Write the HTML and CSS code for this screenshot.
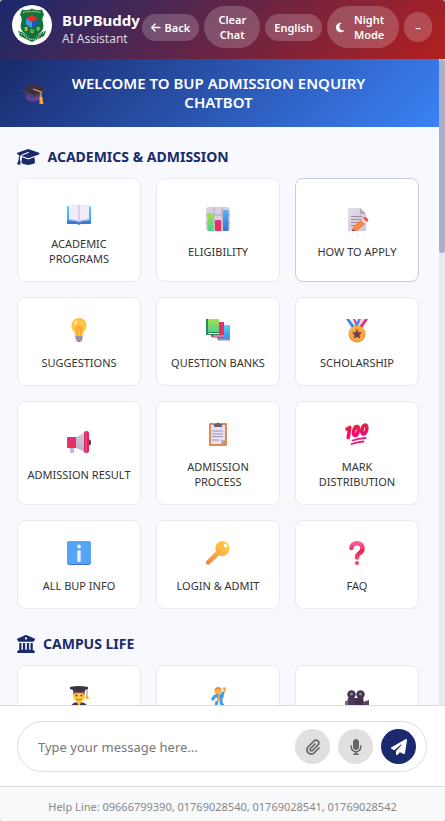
FILE: index.html
```html
<!DOCTYPE html>
<html lang="en">
<head>
<meta charset="utf-8">
<meta name="viewport" content="width=device-width, initial-scale=1">
<title>BUPBuddy</title>
<link rel="stylesheet" href="styles.css">
</head>
<body>
<svg class="defs" width="0" height="0" aria-hidden="true">
  <defs>
    <linearGradient id="blue" x1="0" y1="0" x2="0" y2="1"><stop offset="0" stop-color="#4cb4fa"/><stop offset="1" stop-color="#3a70d4"/></linearGradient>
    <linearGradient id="sky" x1="0" y1="0" x2="0" y2="1"><stop offset="0" stop-color="#56d3f8"/><stop offset="1" stop-color="#3597ec"/></linearGradient>
    <linearGradient id="green" x1="0" y1="0" x2="0" y2="1"><stop offset="0" stop-color="#a6e04a"/><stop offset="1" stop-color="#4bd191"/></linearGradient>
    <linearGradient id="red" x1="0" y1="0" x2="0" y2="1"><stop offset="0" stop-color="#e02f83"/><stop offset="1" stop-color="#ea3148"/></linearGradient>
    <linearGradient id="pink" x1="0" y1="0" x2="0" y2="1"><stop offset="0" stop-color="#fc5a9b"/><stop offset=".6" stop-color="#ea2548"/><stop offset="1" stop-color="#f2466c"/></linearGradient>
    <linearGradient id="hundred" x1="0" y1="0" x2="0" y2="1"><stop offset="0" stop-color="#e6223c"/><stop offset="1" stop-color="#f3067e"/></linearGradient>
    <linearGradient id="gold" x1="1" y1="0" x2="0" y2="1"><stop offset="0" stop-color="#ffdc42"/><stop offset="1" stop-color="#f28040"/></linearGradient>
    <linearGradient id="paper" x1="0" y1="0" x2="1" y2="1"><stop offset="0" stop-color="#e6dfea"/><stop offset="1" stop-color="#cfc1d8"/></linearGradient>
    <linearGradient id="horn" x1="0" y1="0" x2="0" y2="1"><stop offset="0" stop-color="#d6d3d8"/><stop offset="1" stop-color="#b9a9cf"/></linearGradient>
    <radialGradient id="bulb" cx=".5" cy=".65" r=".65"><stop offset="0" stop-color="#ffae38"/><stop offset=".5" stop-color="#ffc943"/><stop offset="1" stop-color="#ffbd3c"/></radialGradient>
    <linearGradient id="film" x1="0" y1="0" x2="1" y2="0"><stop offset="0" stop-color="#56405f"/><stop offset="1" stop-color="#3b2a48"/></linearGradient>
  </defs>
</svg>

<div class="chat">
  <header class="header">
    <div class="brand">
      <svg class="logo" viewBox="0 0 40 40" aria-hidden="true">
        <circle cx="20" cy="20" r="20" fill="#fff"/>
        <path d="M20 3.500c-3 2-7 2-10 1L8 10c2 2 2 5 1 8s0 6 1 8l10 9 10-9c1-2 2-5 1-8s-1-6 1-8l-2-5.500c-3 1-7 1-10-1z" fill="#0d7440"/>
        <path d="M11 7.500q9-2 18 0" fill="none" stroke="#c9b33c" stroke-width="1.400" stroke-dasharray="1.500 .8"/>
        <path d="M6 26l4 1 10 7 10-7 4-1-2 5-12 6-12-6z" fill="#17713f"/>
        <path d="M7 28q3 0 6 3t7 3.500 7-3.500 6-3" fill="none" stroke="#e9e6a0" stroke-width="1.200" stroke-dasharray="1 1"/>
        <path d="M20 10l6 3.500-6 3.500-6-3.500z" fill="#f02a2a"/>
        <path d="M14 13.500l6 3.500v6l-6-3.500z" fill="#3d9be8"/>
        <path d="M26 13.500L20 17v6l6-3.500z" fill="#2456b8"/>
        <text x="14" y="26" class="logo-letter">B</text><text x="20" y="28" class="logo-letter">U</text><text x="26" y="26" class="logo-letter">P</text>
      </svg>
      <div class="brand-text">
        <h1 class="brand-name">BUPBuddy</h1>
        <p class="brand-role">AI Assistant</p>
      </div>
    </div>
    <nav class="actions" aria-label="Chat actions">
      <button class="pill" type="button"><svg class="pill-icon" viewBox="0 0 448 512" aria-hidden="true"><path d="M9.400 233.400c-12.500 12.500-12.500 32.800 0 45.300l160 160c12.500 12.500 32.800 12.500 45.300 0s12.500-32.800 0-45.300L109.200 288 416 288c17.700 0 32-14.300 32-32s-14.300-32-32-32l-306.700 0L214.600 118.600c12.500-12.500 12.500-32.800 0-45.300s-32.800-12.500-45.300 0l-160 160z"/></svg><span>Back</span></button>
      <button class="pill pill-narrow" type="button">Clear Chat</button>
      <button class="pill" type="button">English</button>
      <button class="pill pill-mode" type="button"><svg class="pill-icon" viewBox="0 0 384 512" aria-hidden="true"><path d="M223.500 32C100 32 0 132.300 0 256S100 480 223.500 480c60.600 0 115.500-24.200 155.800-63.400c5-4.900 6.300-12.500 3.100-18.700s-10.100-9.700-17-8.500c-9.800 1.700-19.800 2.600-30.100 2.600c-96.900 0-175.500-78.800-175.500-176c0-65.800 36-123.100 89.300-153.300c6.100-3.500 9.200-10.500 7.700-17.300s-7.300-11.900-14.300-12.500c-6.300-.5-12.600-.8-19-.8z"/></svg><span class="pill-label">Night Mode</span></button>
      <button class="pill pill-min" type="button" aria-label="Minimize">–</button>
    </nav>
  </header>

  <div class="viewport">
    <main class="content">
      <div class="banner">
        <svg class="emoji" viewBox="0 0 24 24" aria-hidden="true">
          <path d="M4 11v7c3 4 13 4 15 0v-7z" fill="#4b3a78"/><path d="M4 14q8 5 15-1v4c-3 4-12 4-15 1z" fill="#5c4596"/>
          <path d="M0 9L10 2l14 5-11 9z" fill="#3a2f42"/><path d="M0 9l13 6 11-8v1l-11 8L0 10z" fill="#574a63"/>
          <path d="M11 8l8 3v8" fill="none" stroke="#f3a03c" stroke-width="1.200"/><path d="M17.500 17h3l1 6h-4z" fill="#ff9a3d"/><circle cx="19" cy="17" r="1.500" fill="#f9b842"/>
        </svg>
        <h2 class="banner-title">WELCOME TO BUP ADMISSION ENQUIRY CHATBOT</h2>
      </div>

      <section class="section">
        <h3 class="section-title"><svg class="cap-icon" viewBox="0 0 640 512" aria-hidden="true"><path d="M320 32c-8.100 0-16.100 1.400-23.700 4.100L15.800 137.400C6.300 140.900 0 149.900 0 160s6.300 19.100 15.800 22.600l57.900 20.900C57.300 229.300 48 259.800 48 291.900v28.100c0 28.400-10.800 57.700-22.300 80.800c-6.500 13-13.900 25.800-22.500 37.600C0 442.700-.9 448.300 .9 453.400s6 8.900 11.200 10.200l64 16c4.200 1.100 8.700 .3 12.400-2s6.300-6.100 7.100-10.400c8.600-42.800 4.300-81.200-2.100-108.700C90.300 344.300 86 329.800 80 316.500V291.900c0-30.200 10.200-58.700 27.900-81.500c12.900-15.500 29.600-28 49.200-35.700l157-61.700c8.200-3.200 17.500 .8 20.700 9s-.8 17.500-9 20.700l-157 61.700c-12.400 4.900-23.300 12.400-32.200 21.600l159.600 57.600c7.600 2.700 15.600 4.100 23.700 4.100s16.100-1.400 23.700-4.100L624.200 182.600c9.500-3.400 15.800-12.500 15.800-22.600s-6.300-19.100-15.800-22.600L343.700 36.100C336.100 33.400 328.100 32 320 32zM128 408c0 35.300 86 72 192 72s192-36.700 192-72L496.700 262.600 354.500 314c-11.100 4-22.800 6-34.500 6s-23.500-2-34.500-6L143.300 262.600 128 408z"/></svg>ACADEMICS &amp; ADMISSION</h3>
        <div class="grid">
          <button class="card" type="button"><span class="slot"><svg class="emoji" viewBox="0 0 24 24" aria-hidden="true">
            <path d="M0 8q0-1 1-1h22q1 0 1 1v16q0 1-1 1H1q-1 0-1-1z" fill="url(#sky)"/><path d="M0 22h24v2q0 1-1 1h-9l-2 1-2-1H1q-1 0-1-1z" fill="#397bd5"/>
            <path d="M2 6q5-1 10 0 5-1 10 0v15q-5 0-10 2-5-2-10-2z" fill="#f1ecf9"/><path d="M11 6h2v16h-2z" fill="#dacfe8"/><path d="M2 20q6 0 10 2 4-2 10-2v1q-6 0-10 2-4-2-10-2z" fill="#c9b9df"/>
          </svg></span><span class="label">ACADEMIC PROGRAMS</span></button>
          <button class="card" type="button"><span class="slot"><svg class="emoji" viewBox="0 0 24 24" aria-hidden="true">
            <rect width="24" height="24" rx="3" fill="#d8d1df"/><path d="M8 0v24M16 0v24M0 8h24M0 16h24" stroke="#b4a9c0" stroke-width="1"/>
            <rect x="1.500" y="6" width="6" height="18" rx="1" fill="url(#green)"/><rect x="9" y="13" width="6" height="11" rx="1" fill="url(#red)"/><rect x="17" y="3" width="5.500" height="21" rx="1" fill="url(#blue)"/>
          </svg></span><span class="label">ELIGIBILITY</span></button>
          <button class="card card-active" type="button"><span class="slot"><svg class="emoji" viewBox="0 0 24 24" aria-hidden="true">
            <path d="M3 1h12l6 6v17H3z" fill="url(#paper)"/><path d="M15 1l6 6h-6z" fill="#b5a9c0"/><path d="M6 9.500h11M6 12.500h11M6 15.500h9M6 18.500h5" stroke="#9b91a1"/>
            <path d="M8 20L18 11l4 4-10 9H7z" fill="#fa7e42"/><path d="M10 22l10-9" stroke="#ffac50" stroke-width="1"/><path d="M16 13l2-2 4 4-2 2z" fill="#e4dce9"/><path d="M18 11q2-2 4 0l1 1q1 1-1 3z" fill="#f64b4d"/><path d="M7 24l1-2 2 2z" fill="#7a3550"/>
          </svg></span><span class="label">HOW TO APPLY</span></button>

          <button class="card" type="button"><span class="slot"><svg class="emoji" viewBox="0 0 24 24" aria-hidden="true">
            <path d="M12 0c5 0 7.500 4 7.500 7.500 0 5-3 5-3.500 9.500H8C7.500 12.500 4.500 12.500 4.500 7.500 4.500 4 7 0 12 0z" fill="url(#bulb)"/><ellipse cx="8.500" cy="4.500" rx="1.500" ry="2.500" fill="#ffe38b" transform="rotate(30 8.500 4.500)"/>
            <path d="M10.500 17l-1-6q-1-2.500 2.500-2.500t2.500 2.500l-1 6" fill="none" stroke="#f0932e" stroke-width=".9"/><path d="M8 17.500h8l-1 4.500-2 2h-2l-2-2z" fill="#8d7a98"/><path d="M8 19.500l8-1M8.500 22l7-1.500" stroke="#c5b7ce" stroke-width=".8"/>
          </svg></span><span class="label">SUGGESTIONS</span></button>
          <button class="card" type="button"><span class="slot"><svg class="emoji" viewBox="0 0 24 24" aria-hidden="true">
            <path d="M11 7h13v13H11z" fill="url(#sky)"/><path d="M11 20h13v2.500H12z" fill="#8b85d8"/><path d="M6 4h12v13H6z" fill="url(#red)"/><path d="M5 17h13v2.500H7q-2 0-2-2.500z" fill="#aa2861"/><path d="M7 18h11" stroke="#eddaf0"/>
            <path d="M0 1h13v13H0z" fill="url(#green)"/><path d="M0 1h2v15H0z" fill="#278c57"/><path d="M0 14h13v3H1q-1 0-1-1z" fill="#34885b"/><path d="M2 15.500h11" stroke="#e1dceb"/>
          </svg></span><span class="label">QUESTION BANKS</span></button>
          <button class="card" type="button"><span class="slot"><svg class="emoji" viewBox="0 0 24 24" aria-hidden="true">
            <path d="M1 1h8l4 7-4 3z" fill="#dcebfb"/><path d="M1 1h3l6 8-3 1z" fill="#3288ee"/><path d="M8 1h2l4 7-3 1z" fill="#ee4473"/><path d="M23 1h-8l-4 7 4 3z" fill="#e3ddf5"/><path d="M23 1h-3l-6 8 3 1z" fill="#f8256c"/><path d="M16 1h-3l-3 7 2 2z" fill="#4c90ec"/>
            <circle cx="12" cy="16" r="8.500" fill="#f28e3a"/><circle cx="12" cy="15.500" r="7.500" fill="#ffb542"/><circle cx="12" cy="16" r="6" fill="#f6a23d"/><path d="M12 11l1.500 3.200 3.500.4-2.500 2.400.6 3.500-3.100-1.700-3.100 1.700.6-3.500L7 14.600l3.500-.4z" fill="#7a3e51"/>
          </svg></span><span class="label">SCHOLARSHIP</span></button>

          <button class="card" type="button"><span class="slot"><svg class="emoji" viewBox="0 0 24 24" aria-hidden="true">
            <path d="M3 17h4v6H4q-1 0-1-1z" fill="#c8b6dc"/><ellipse cx="22" cy="12.500" rx="2" ry="3" fill="#47384f"/><path d="M8 7q6-1 10-6v22q-4-4-10-5z" fill="url(#horn)"/><path d="M0 8q0-1 1-1h8v11H1q-1 0-1-1z" fill="url(#red)"/><rect x="17" y="1" width="5" height="22" rx="2.500" fill="#d9265f"/><path d="M19 2v20" stroke="#f65a83" stroke-width="1"/>
          </svg></span><span class="label">ADMISSION RESULT</span></button>
          <button class="card" type="button"><span class="slot"><svg class="emoji" viewBox="0 0 24 24" aria-hidden="true">
            <rect x="3" y="1" width="18" height="23" rx="1" fill="#d98e58"/><path d="M5 3h14v15l-4 4H5z" fill="#e7dff0"/><path d="M15 22v-4h4z" fill="#b9a9c6"/><path d="M8 2h2q2-3 4 0h2v3H8z" fill="#6e6175"/><path d="M6 9h11M6 12h11M6 14.500h11M6 18h7" stroke="#a196ad"/>
          </svg></span><span class="label">ADMISSION PROCESS</span></button>
          <button class="card" type="button"><span class="slot"><svg class="emoji" viewBox="0 0 24 24" aria-hidden="true">
            <g fill="none" stroke="url(#hundred)" stroke-width="3.600" stroke-linecap="round" stroke-linejoin="round"><path d="M2 7L4.800 5.500 3.300 15.500"/><ellipse cx="11" cy="9" rx="2.200" ry="4.600" transform="rotate(14 11 9)"/><ellipse cx="19.300" cy="7.500" rx="2.300" ry="4.600" transform="rotate(14 19.300 7.500)"/></g>
            <path d="M7.500 18.500q6-2 13-2.500M6.500 22q6-2 12-2.500" fill="none" stroke="#f2127b" stroke-width="1.800" stroke-linecap="round"/>
          </svg></span><span class="label">MARK DISTRIBUTION</span></button>

          <button class="card" type="button"><span class="slot"><svg class="emoji" viewBox="0 0 24 24" aria-hidden="true">
            <rect width="24" height="24" rx="3" fill="#3c72d3"/><rect width="24" height="23" rx="3" fill="#55a5f6"/><circle cx="12" cy="5.500" r="2" fill="#f1effb"/><rect x="10.300" y="9" width="3.400" height="12" rx="1.600" fill="#f1effb"/>
          </svg></span><span class="label">ALL BUP INFO</span></button>
          <button class="card" type="button"><span class="slot"><svg class="emoji" viewBox="0 0 24 24" aria-hidden="true">
            <path fill-rule="evenodd" d="M16.500 0a7.500 7.500 0 1 1-3 14.500L11 16l-1 2-2 .5-1 2-2 1-1.500 2q-2 1-3.500-1v-2L10 10.500A7.500 7.500 0 0 1 16.500 0zm3 3a1.700 1.700 0 1 0 .1 0z" fill="url(#gold)"/>
          </svg></span><span class="label">LOGIN &amp; ADMIT</span></button>
          <button class="card" type="button"><span class="slot"><svg class="emoji" viewBox="0 0 24 24" aria-hidden="true">
            <path d="M6.500 7C6 1 18 0 17.500 7.500c0 5-5.500 4-5.500 9" fill="none" stroke="url(#pink)" stroke-width="4.600" stroke-linecap="round"/><circle cx="12" cy="22" r="2" fill="#f24265"/>
          </svg></span><span class="label">FAQ</span></button>
        </div>
      </section>

      <section class="section">
        <h3 class="section-title"><svg class="hall-icon" viewBox="0 0 512 512" aria-hidden="true"><path d="M243.400 2.600l-224 96c-14 6-21.800 21-18.700 35.800S16.800 160 32 160v8c0 13.300 10.700 24 24 24H456c13.300 0 24-10.700 24-24v-8c15.200 0 28.300-10.700 31.300-25.600s-4.800-29.900-18.700-35.800l-224-96c-8-3.400-17.200-3.400-25.200 0zM128 224H64V420.300c-.6 .3-1.200 .7-1.800 1.100l-48 32c-11.700 7.800-17 22.400-12.900 35.900S17.900 512 32 512H480c14.100 0 26.500-9.200 30.600-22.700s-1.100-28.100-12.900-35.900l-48-32c-.6-.4-1.200-.7-1.800-1.100V224H384V416H344V224H280V416H232V224H168V416H128V224zM256 64a32 32 0 1 1 0 64 32 32 0 1 1 0-64z"/></svg>CAMPUS LIFE</h3>
        <div class="grid">
          <button class="card card-top" type="button" aria-label="Students"><span class="slot"><svg class="emoji" viewBox="0 0 24 24" aria-hidden="true">
            <path d="M3 24q0-8 9-8t9 8z" fill="#44374f"/><path d="M9 15h6l-3 5z" fill="#ffc34a"/><circle cx="12" cy="10" r="6" fill="#ffc83f"/><path d="M6 9q0-5 6-5t6 5l-2-2H8z" fill="#6f4636"/><path d="M3 1q9-2 18 0v2l-3 1v2q-6-2-12 0V4L3 3z" fill="#3e3348"/><path d="M20 3v9" stroke="#9588a1" stroke-width="1"/><path d="M19 10h2l1 3h-3z" fill="#f3a63d"/><circle cx="9.500" cy="9.500" r=".9" fill="#593a34"/><circle cx="14.500" cy="9.500" r=".9" fill="#593a34"/><path d="M9.500 13q2.500 2 5 0" stroke="#e7583c" stroke-width="1.200" fill="none"/>
          </svg></span></button>
          <button class="card card-top" type="button" aria-label="Activities"><span class="slot"><svg class="emoji" viewBox="0 0 24 24" aria-hidden="true">
            <circle cx="12" cy="5" r="3.500" fill="#ffb33f"/><path d="M8.500 5q0-4 4-4 3 0 3 3l-3-1z" fill="#f28b3a"/><path d="M17 3q2-2 2 1l-2 3" stroke="#ffa33c" stroke-width="2" fill="none"/><path d="M17 6l-1 5-7-1-3 4M10 9l5 1v7l4 5M11 15l-1 5-5 2" fill="none" stroke="#36a1f4" stroke-width="3" stroke-linejoin="round"/><path d="M13 8l-1 7" stroke="#f59c41" stroke-width="2"/>
          </svg></span></button>
          <button class="card card-top" type="button" aria-label="Media"><span class="slot"><svg class="emoji" viewBox="0 0 24 24" aria-hidden="true">
            <rect x="2.500" y="12" width="16" height="11" rx="1" fill="url(#film)"/><path d="M18 16l6-2v9l-6-2z" fill="#58455f"/><path d="M0 15h3v7H0z" fill="#796982"/><circle cx="6.500" cy="8.500" r="4.200" fill="#46334f"/><circle cx="15.500" cy="8.500" r="4.200" fill="#46334f"/><circle cx="6.500" cy="8" r="1.500" fill="#91839a"/><circle cx="15.500" cy="8" r="1.500" fill="#91839a"/>
          </svg></span></button>
        </div>
      </section>
    </main>
    <div class="rail" aria-hidden="true"><div class="thumb"></div></div>
  </div>

  <form class="composer">
    <div class="composer-box">
      <input class="composer-input" type="text" placeholder="Type your message here..." aria-label="Message">
      <button class="round" type="button" aria-label="Attach file"><svg class="round-icon" viewBox="0 0 448 512" aria-hidden="true"><path d="M364.200 83.800c-24.400-24.400-64-24.400-88.400 0l-184 184c-42.100 42.100-42.100 110.300 0 152.400s110.300 42.100 152.400 0l152-152c10.900-10.900 28.700-10.900 39.600 0s10.900 28.700 0 39.600l-152 152c-64 64-167.600 64-231.600 0s-64-167.600 0-231.600l184-184c46.300-46.300 121.300-46.300 167.600 0s46.300 121.300 0 167.600l-176 176c-28.600 28.600-75 28.600-103.600 0s-28.600-75 0-103.600l144-144c10.900-10.900 28.700-10.900 39.600 0s10.900 28.700 0 39.600l-144 144c-6.700 6.700-6.700 17.700 0 24.400s17.700 6.700 24.400 0l176-176c24.400-24.400 24.400-64 0-88.400z"/></svg></button>
      <button class="round" type="button" aria-label="Voice input"><svg class="round-icon" viewBox="0 0 384 512" aria-hidden="true"><path d="M192 0C139 0 96 43 96 96V256c0 53 43 96 96 96s96-43 96-96V96c0-53-43-96-96-96zM64 216c0-13.300-10.700-24-24-24s-24 10.700-24 24v40c0 89.100 66.200 162.700 152 174.400V464H120c-13.300 0-24 10.700-24 24s10.700 24 24 24h72 72c13.300 0 24-10.700 24-24s-10.700-24-24-24H216V430.400c85.800-11.700 152-85.300 152-174.400V216c0-13.300-10.700-24-24-24s-24 10.700-24 24v40c0 70.700-57.300 128-128 128s-128-57.300-128-128V216z"/></svg></button>
      <button class="round round-send" type="submit" aria-label="Send"><svg class="round-icon" viewBox="0 0 512 512" aria-hidden="true"><path d="M498.100 5.600c10.100 7 15.400 19.100 13.500 31.200l-64 416c-1.500 9.700-7.400 18.200-16 23s-18.900 5.400-28 1.600L284 427.700l-68.500 74.100c-8.900 9.700-22.900 12.900-35.200 8.100S160 493.200 160 480V396.400c0-4 1.500-7.800 4.200-10.700L331.800 202.800c5.800-6.300 5.600-16-.4-22s-15.700-6.400-22-.7L106 360.800 17.700 316.600C7.100 311.300 .3 300.700 0 288.900s5.900-22.800 16.100-28.700l448-256c10.700-6.100 23.900-5.500 34 1.400z"/></svg></button>
    </div>
  </form>
  <footer class="footer">Help Line: 09666799390, 01769028540, 01769028541, 01769028542</footer>
</div>
</body>
</html>
```
FILE: styles.css
```css
* { box-sizing: border-box; }

body {
  margin: 0;
  background: #b9bcc4;
  font-family: "Noto Sans", "Open Sans", sans-serif;
  color: #333;
}

h1, h2, h3, p { margin: 0; }
button, input { font-family: inherit; }
.defs { position: absolute; }

.chat {
  display: flex;
  flex-direction: column;
  height: 100vh;
  overflow: hidden;
  border-radius: 3px;
  background: #fff;
}

/* Header */
.header {
  display: flex;
  align-items: flex-start;
  justify-content: space-between;
  padding: 5px 13px 11px 12px;
  background: linear-gradient(135deg, #1a2a6c, #b21f1f);
  color: #fff;
}
.brand { display: flex; gap: 10px; }
.logo { width: 40px; height: 40px; flex: none; }
.logo-letter { font: bold 5px "Noto Sans", sans-serif; fill: #f4c430; text-anchor: middle; }
.brand-text { padding-top: 5px; }
.brand-name { font-size: 15px; line-height: 20px; font-weight: 700; }
.brand-role { font-size: 12px; line-height: 18px; opacity: .8; white-space: nowrap; }

.actions { display: flex; align-items: center; gap: 5px; padding-top: 1px; }
.pill {
  display: flex;
  align-items: center;
  justify-content: center;
  gap: 4px;
  flex: none;
  padding: 6px 9px;
  border: 0;
  border-radius: 21px;
  background: rgba(255, 255, 255, .2);
  color: #fff;
  font-size: 11px;
  line-height: 15px;
  font-weight: 600;
}
.pill-narrow { width: 56px; }
.pill-mode { width: 72px; }
.pill-label { flex: 1; }
.pill-min { width: 28px; height: 30px; padding: 0; }
.pill-icon { height: 11px; flex: none; fill: currentColor; }

/* Scrolling content */
.viewport { flex: 1; display: flex; min-height: 0; background: #f8f9fe; }
.content { flex: 1; min-width: 0; overflow: hidden; }
.rail { width: 6px; background: #e9eaef; }
.thumb { height: 30%; border-radius: 3px; background: #a9b0ca; }

.banner {
  display: grid;
  grid-template-columns: 24px 1fr 24px;
  align-items: center;
  gap: 10px;
  padding: 15px 24px 15px 22px;
  background: linear-gradient(135deg, #1a2a6c, #3b82f6);
  color: #fff;
}
.banner-title { font-size: 15px; line-height: 19px; font-weight: 600; text-align: center; }
.emoji { display: block; width: 24px; height: 24px; overflow: visible; }

.section { padding: 20px 20px 5px 17px; }
.section-title {
  display: flex;
  align-items: center;
  gap: 8px;
  margin-bottom: 11px;
  color: #1a2a6c;
  font-size: 14px;
  line-height: 20px;
  font-weight: 700;
}
.cap-icon, .hall-icon { height: 18px; fill: currentColor; }

.grid { display: grid; grid-template-columns: repeat(3, 1fr); gap: 15px; }
.card {
  display: flex;
  flex-direction: column;
  align-items: center;
  justify-content: center;
  gap: 8px;
  min-height: 89px;
  padding: 15px 8px;
  border: 1px solid #e8eaef;
  border-radius: 8px;
  background: #fff;
  color: #333;
  font-size: 11px;
  line-height: 15px;
}
.card-active { border-color: #c8cbdb; }
.card-top { justify-content: flex-start; }
.slot { display: flex; align-items: center; height: 34px; }

/* Composer */
.composer { padding: 15px 18px 14px 17px; border-top: 1px solid #ddd; background: #fff; }
.composer-box {
  display: flex;
  align-items: center;
  gap: 8px;
  padding: 7px 10px 7px 20px;
  border: 1px solid #ddd;
  border-radius: 26px;
}
.composer-input {
  flex: 1;
  min-width: 0;
  padding: 0;
  border: 0;
  outline: 0;
  background: none;
  color: #333;
  font-size: 13px;
}
.composer-input::placeholder { color: #777; }
.round {
  display: flex;
  align-items: center;
  justify-content: center;
  flex: none;
  width: 35px;
  height: 35px;
  padding: 0;
  border: 0;
  border-radius: 50%;
  background: #e0e0e0;
  color: #666;
}
.round-send { background: #1a2a6c; color: #fff; }
.round-icon { height: 16px; fill: currentColor; }

.footer {
  padding: 12px 10px 6px;
  border-top: 1px solid #ddd;
  background: #f8f9fa;
  color: #888;
  font-size: 11px;
  line-height: 16px;
  text-align: center;
}
```
